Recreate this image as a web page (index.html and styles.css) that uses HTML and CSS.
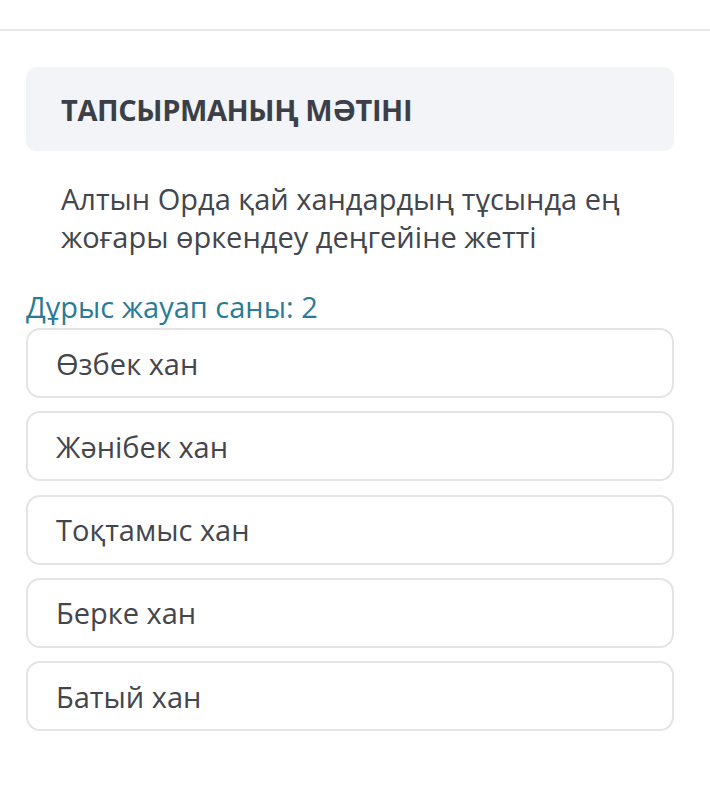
FILE: index.html
```html
<!DOCTYPE html>
<html lang="kk">
<head>
<meta charset="utf-8">
<link rel="stylesheet" href="styles.css">
</head>
<body>
<div class="topbar"></div>
<main class="content">
  <section class="task-head">
    <h1 class="task-title">ТАПСЫРМАНЫҢ МӘТІНІ</h1>
  </section>
  <p class="question">Алтын Орда қай хандардың тұсында ең жоғары өркендеу деңгейіне жетті</p>
  <div class="count">Дұрыс жауап саны: 2</div>
  <ul class="options">
    <li class="option">Өзбек хан</li>
    <li class="option">Жәнібек хан</li>
    <li class="option">Тоқтамыс хан</li>
    <li class="option">Берке хан</li>
    <li class="option">Батый хан</li>
  </ul>
</main>
</body>
</html>
```
FILE: styles.css
```css
* { box-sizing: border-box; }
html, body { margin: 0; padding: 0; background: #ffffff; }
body {
  font-family: "Open Sans", "Noto Sans", sans-serif;
  color: #3e4148;
}
.topbar {
  height: 31px;
  border-bottom: 2px solid #e6e6e6;
}
.content {
  padding: 36px 36px 0 26px;
}
.task-head {
  height: 84px;
  background: #f2f4f7;
  border-radius: 10px;
  padding-left: 35px;
  display: flex;
  align-items: center;
}
.task-title {
  margin: 0;
  font-size: 29px;
  font-weight: 700;
  letter-spacing: -0.4px;
  color: #3b3f48;
  white-space: nowrap;
}
.question {
  margin: 29px 0 0 0;
  padding: 0 40px 0 35px;
  font-size: 29px;
  line-height: 38px;
  color: #43464c;
}
.count {
  margin-top: 32px;
  font-size: 29px;
  line-height: 38px;
  color: #2a7c96;
}
.options {
  list-style: none;
  margin: 2px 0 0 0;
  padding: 0;
  display: flex;
  flex-direction: column;
  gap: 13.25px;
}
.option {
  height: 70px;
  border: 2px solid #e4e4e4;
  border-radius: 14px;
  padding-left: 28px;
  display: flex;
  align-items: center;
  font-size: 29px;
  color: #43464c;
}
```
